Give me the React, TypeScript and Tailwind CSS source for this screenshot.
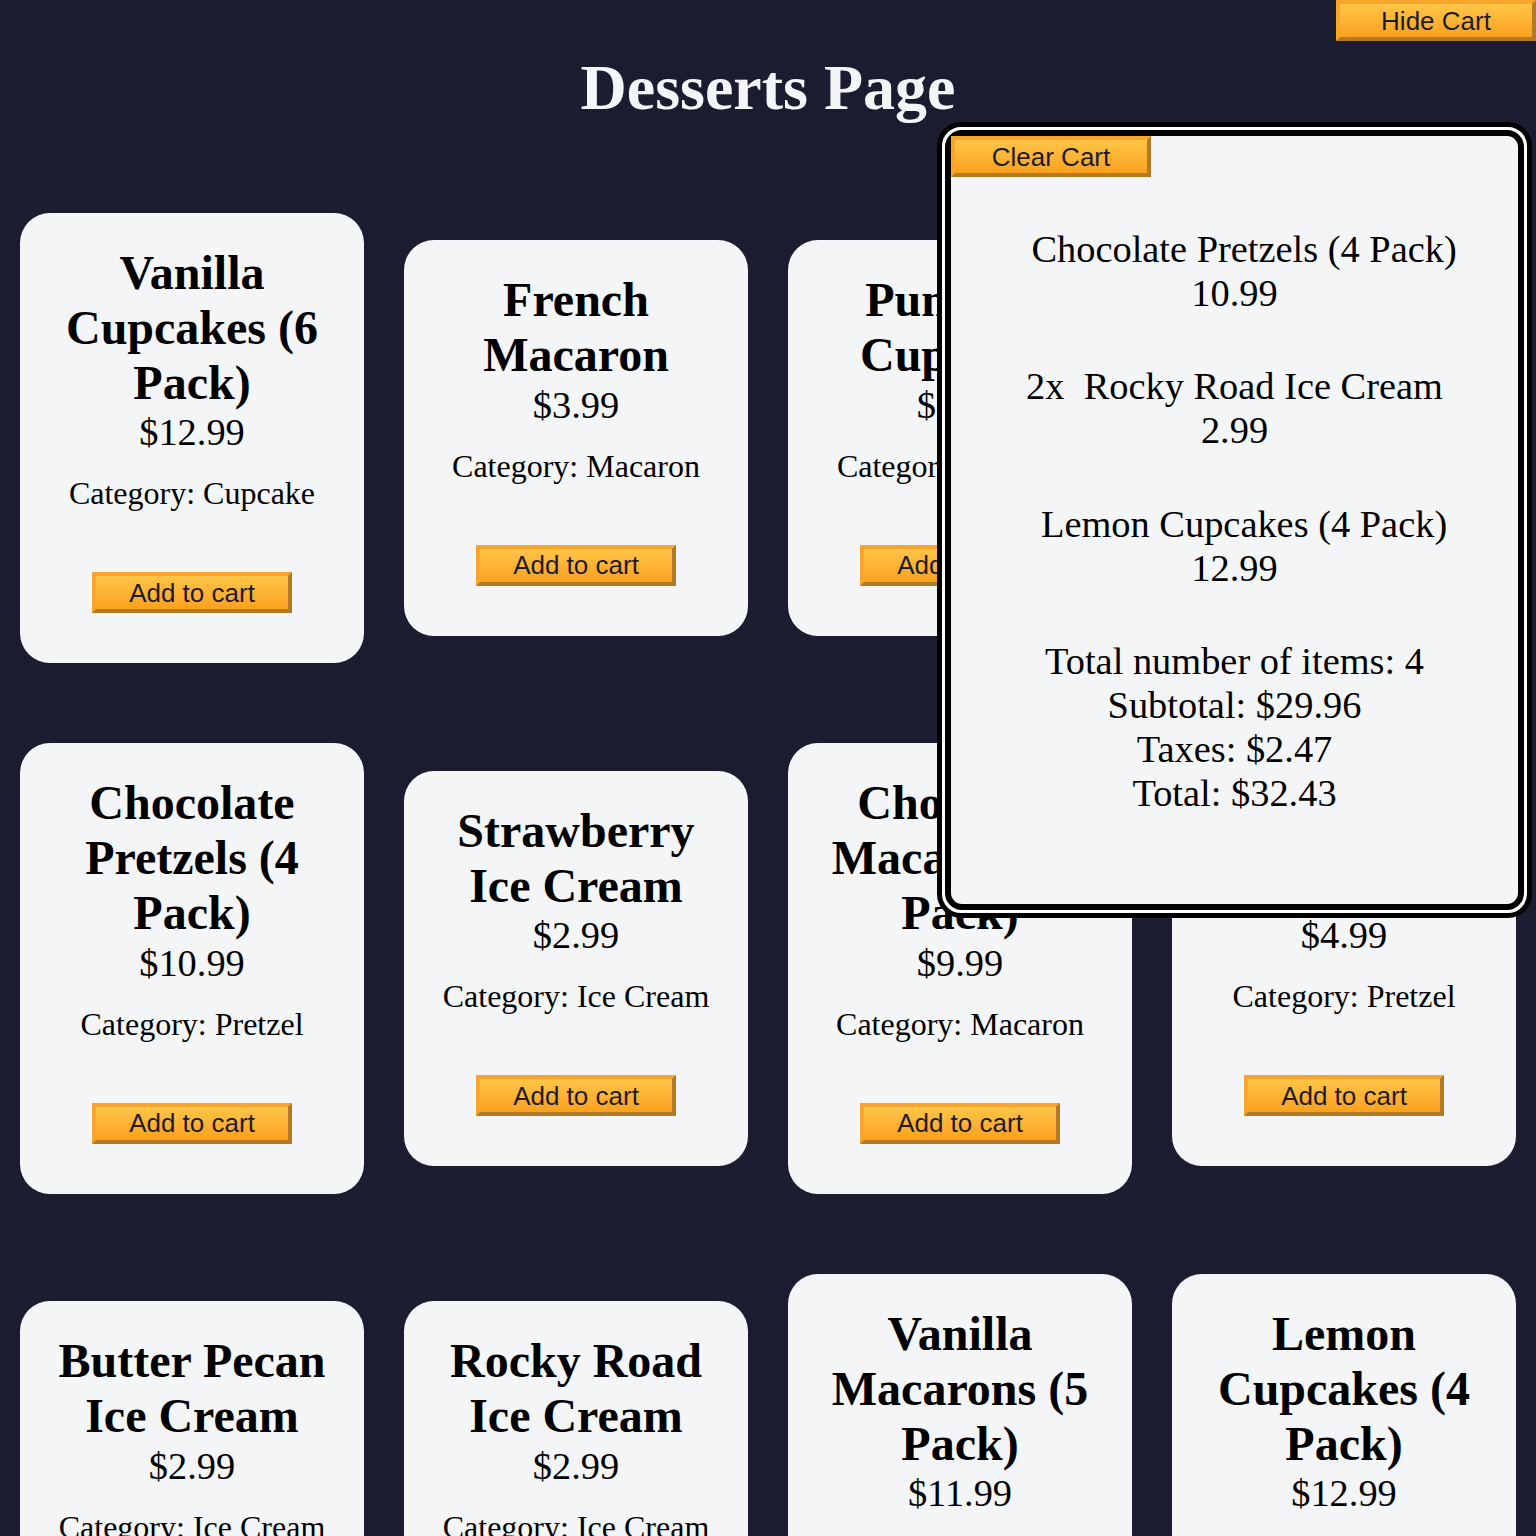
import React from 'react'

interface Product {
  name: string
  price: string
  category: string
}

const products: Product[] = [
  { name: 'Vanilla Cupcakes (6 Pack)', price: '12.99', category: 'Cupcake' },
  { name: 'French Macaron', price: '3.99', category: 'Macaron' },
  { name: 'Pumpkin Cupcakes', price: '5.99', category: 'Cupcake' },
  { name: 'Pistachio Macaron', price: '3.99', category: 'Macaron' },
  { name: 'Chocolate Pretzels (4 Pack)', price: '10.99', category: 'Pretzel' },
  { name: 'Strawberry Ice Cream', price: '2.99', category: 'Ice Cream' },
  { name: 'Chocolate Macarons (5 Pack)', price: '9.99', category: 'Macaron' },
  { name: 'Cinnamon Pretzels', price: '4.99', category: 'Pretzel' },
  { name: 'Butter Pecan Ice Cream', price: '2.99', category: 'Ice Cream' },
  { name: 'Rocky Road Ice Cream', price: '2.99', category: 'Ice Cream' },
  { name: 'Vanilla Macarons (5 Pack)', price: '11.99', category: 'Macaron' },
  { name: 'Lemon Cupcakes (4 Pack)', price: '12.99', category: 'Cupcake' },
]

const cartItems = [
  { qty: 1, name: 'Chocolate Pretzels (4 Pack)', price: '10.99' },
  { qty: 2, name: 'Rocky Road Ice Cream', price: '2.99' },
  { qty: 1, name: 'Lemon Cupcakes (4 Pack)', price: '12.99' },
]

function OrangeButton({ children }: { children: React.ReactNode }) {
  return (
    <button className="block w-[200px] h-[41px] shrink-0 border-4 border-t-[#f7a52b] border-l-[#f7a52b] border-r-[#b27a27] border-b-[#b27a27] bg-linear-to-b from-[#ffc547] to-[#fba11b] text-[#1c1c31] font-['Liberation_Sans',Arial,sans-serif] text-[26px] leading-none">
      {children}
    </button>
  )
}

function ProductCard({ product }: { product: Product }) {
  return (
    <div className="bg-[#f4f5f7] rounded-[30px] px-6 pt-[32px] pb-[50px] flex flex-col items-center text-center text-black">
      <h2 className="text-[48px] font-bold leading-[1.15]">{product.name}</h2>
      <p className="text-[38.4px] leading-[1.15]">${product.price}</p>
      <p className="text-[32px] leading-[1.15] mt-[21px]">Category: {product.category}</p>
      <div className="mt-[60px]">
        <OrangeButton>Add to cart</OrangeButton>
      </div>
    </div>
  )
}

function Cart() {
  return (
    <div className="absolute left-[937px] top-[122px] w-[595px] h-[796px] rounded-[24px] border-[5px] border-black bg-white p-[3px]">
      <div className="h-full rounded-[17px] border-[6px] border-black bg-[#f4f5f7] text-black text-[38.4px] leading-[1.15] text-center">
        <OrangeButton>Clear Cart</OrangeButton>
        <div className="mt-[50px] flex flex-col gap-[49px]">
          {cartItems.map((item) => (
            <div key={item.name}>
              <p className="whitespace-pre">{(item.qty > 1 ? `${item.qty}x` : '') + '\u00a0 ' + item.name}</p>
              <p>{item.price}</p>
            </div>
          ))}
          <div>
            <p>Total number of items: 4</p>
            <p>Subtotal: $29.96</p>
            <p>Taxes: $2.47</p>
            <p>Total: $32.43</p>
          </div>
        </div>
      </div>
    </div>
  )
}

export default function App() {
  return (
    <div className="relative min-h-screen bg-[#1c1c31] font-['Liberation_Serif','Times_New_Roman',serif] pb-[80px]">
      <div className="flex justify-end">
        <OrangeButton>Hide Cart</OrangeButton>
      </div>
      <h1 className="mt-[10px] text-center text-[64px] font-bold leading-[1.15] text-[#f4f5f7]">Desserts Page</h1>
      <div className="mt-[88px] px-[20px] grid grid-cols-4 gap-x-[40px] gap-y-[80px] items-center">
        {products.map((p) => (
          <ProductCard key={p.name} product={p} />
        ))}
      </div>
      <Cart />
    </div>
  )
}
